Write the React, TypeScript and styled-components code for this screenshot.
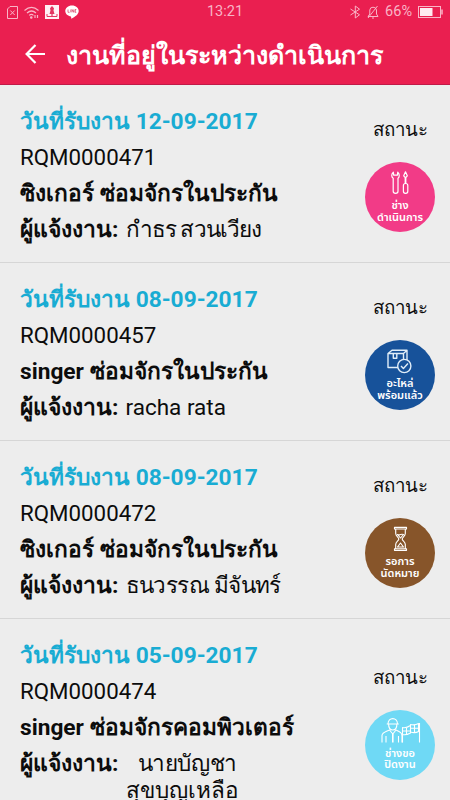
import React from 'react';
import styled, { createGlobalStyle } from 'styled-components';

const Global = createGlobalStyle`
  * { box-sizing: border-box; }
  body { margin: 0; background: #ededed; overflow: hidden; }
`;

const Screen = styled.div`
  width: 450px;
  height: 800px;
  overflow: hidden;
  background: #ededed;
  color: #0c0c0c;
  font-family: Roboto, sans-serif;
`;

const Header = styled.header`
  height: 85px;
  background: #ea1f50;
  border-bottom: 1px solid #c01a48;
  color: #fff;
`;

const StatusBar = styled.div`
  height: 24px;
  padding: 0 7px;
  display: grid;
  grid-template-columns: 1fr auto 1fr;
  align-items: center;
  color: #f9b4c6;
  font-size: 14.5px;
  line-height: 24px;
`;

const Icons = styled.div<{ $end?: boolean }>`
  display: flex;
  align-items: center;
  justify-content: ${p => (p.$end ? 'flex-end' : 'flex-start')};
  gap: 6px;
  svg { display: block; }
`;

const TitleBar = styled.div`
  height: 60px;
  display: flex;
  align-items: center;
  padding-left: 25px;
  svg { display: block; }
`;

const Title = styled.h1`
  margin: 3px 0 0 20.5px;
  font-size: 25.1px;
  line-height: 36px;
  font-weight: 700;
  white-space: nowrap;
`;

const Job = styled.article<{ $tall?: boolean }>`
  height: ${p => (p.$tall ? 205 : 178)}px;
  display: flex;
  align-items: center;
  justify-content: space-between;
  padding: 0 15px 0 20px;
  border-bottom: 1px solid #d6d6d6;
`;

const Details = styled.div`
  display: flex;
  flex-direction: column;
  align-self: flex-start;
  padding-top: 18px;
`;

const Line = styled.div<{ $bold?: boolean; $blue?: boolean }>`
  height: 36px;
  line-height: ${p => (p.$bold ? 38 : 36)}px;
  font-size: ${p => (p.$bold ? 22.7 : 22.3)}px;
  white-space: pre;
  font-weight: ${p => (p.$bold ? 700 : 400)};
  color: ${p => (p.$blue ? '#19acd3' : 'inherit')};
`;

const Reporter = styled.div`
  display: flex;
  height: 36px;
  font-size: 22.5px;
  line-height: 36px;
  white-space: pre;
`;

const Label = styled.b`
  width: 105.5px;
  font-size: 22.9px;
  line-height: 38px;
`;

const Names = styled.div<{ $tracking: number }>`
  text-align: center;
  letter-spacing: ${p => p.$tracking}px;
  & > div + div { margin-top: -9px; letter-spacing: 0; }
`;

const Status = styled.div`
  width: 70px;
  display: flex;
  flex-direction: column;
  align-items: center;
`;

const StatusLabel = styled.div`
  font-size: 18.7px;
  line-height: 28px;
  height: 47px;
  padding-top: 1px;
`;

const Badge = styled.div<{ $color: string }>`
  width: 70px;
  height: 70px;
  border-radius: 50%;
  background: ${p => p.$color};
  color: #fff;
  display: flex;
  flex-direction: column;
  align-items: center;
  padding-top: 6px;
  font-family: Roboto, "Noto Sans Thai", sans-serif;
  svg { display: block; flex: none; margin-bottom: 4px; }
`;

const BadgeText = styled.span`
  font-size: 11px;
  line-height: 11.5px;
  font-weight: 600;
  white-space: nowrap;
`;

const ToolsIcon = () => (
  <svg width="50" height="28" viewBox="0 0 50 28" fill="none" stroke="#fff" strokeWidth="1.2" strokeLinejoin="round">
    <path d="M18.3 4.2 18.7 7.2H22.4L22.8 4.2C24.8 6 24.6 9 23 10.3V23.3Q23 25.3 20.6 25.3 18.2 25.3 18.2 23.3V10.3C16.3 9 16.2 6 18.3 4.2Z" />
    <path d="M30.5 3.8 32.3 7.8 30.8 9.5V15H30.2V9.5L28.7 7.8Z" />
    <rect x="28.4" y="15.5" width="4.4" height="9.8" rx="2" />
  </svg>
);

const BoxIcon = () => (
  <svg width="50" height="28" viewBox="0 0 50 28" fill="none" stroke="#e0edf8" strokeWidth="1.4" strokeLinejoin="round">
    <path d="M23 21.5H13V7.5L17 4.2H32L28.5 7.5H13M28.5 7.5V13.5M32 4.2V14M18.3 7.5V12.3H21.8V7.5" />
    <circle cx="29.3" cy="20" r="6.6" />
    <path d="m26 20 2.4 2.5 4.5-5" />
  </svg>
);

const HourglassIcon = () => (
  <svg width="50" height="28" viewBox="0 0 50 28" fill="none" stroke="#fff" strokeWidth="1.15" strokeLinejoin="round">
    <path d="M19.5 3.3H31.5V5H19.5ZM19.5 24.7H31.5V26.3H19.5ZM20.7 5V9.5C20.7 12 23.8 13.3 23.8 15S20.7 18 20.7 20.5V24.7M30.3 5V9.5C30.3 12 27.2 13.3 27.2 15S30.3 18 30.3 20.5V24.7" />
    <path d="M22.5 10.5C24 12 25 9.5 28.5 10.5L25.5 14ZM22.5 23 25.5 19 28.5 23Z" />
  </svg>
);

const WorkerIcon = () => (
  <svg width="50" height="28" viewBox="0 0 50 28" fill="none" stroke="#fff" strokeWidth="1.1" strokeLinejoin="round">
    <path d="M13 8C13 .8 22.5 .8 22.5 8M11.7 8H23.8M13.6 8C13.6 16 21.9 16 21.9 8M7 26.5V19.5C7 16.5 10 16 14.5 14L17.8 18 21 14C25.5 16 27 17 27 20V26.5M11 20V26.5M23.5 20V26.5" />
    <path d="M17.8 18V26.5" strokeWidth="1.6" />
    <path d="M27.5 11.5Q31 12.5 35.5 9.5V17Q31 19.5 27.5 18.5ZM27.5 18V26.5M31.5 11.8V19M27.5 15H35.5M35.5 8.5Q40 9.5 43.5 7.5V15.5Q40 17.5 35.5 16ZM39.5 8.8V16.5M35.5 12.3H43.5M44.5 7V26.5" />
  </svg>
);

const jobs = [
  { date: '12-09-2017', id: 'RQM0000471', title: 'ซิงเกอร์ ซ่อมจักรในประกัน', names: ['กำธร สวนเวียง'], tracking: -0.9, color: '#f23b87', icon: <ToolsIcon />, status: ['ช่าง', 'ดำเนินการ'] },
  { date: '08-09-2017', id: 'RQM0000457', title: 'singer ซ่อมจักรในประกัน', names: ['racha rata'], tracking: 0, color: '#17529a', icon: <BoxIcon />, status: ['อะไหล่', 'พร้อมแล้ว'] },
  { date: '08-09-2017', id: 'RQM0000472', title: 'ซิงเกอร์ ซ่อมจักรในประกัน', names: ['ธนวรรณ มีจันทร์'], tracking: -0.6, color: '#87552a', icon: <HourglassIcon />, status: ['รอการ', 'นัดหมาย'] },
  { date: '05-09-2017', id: 'RQM0000474', title: 'singer ซ่อมจักรคอมพิวเตอร์', names: ['  นายบัญชา', 'สุขบุญเหลือ'], tracking: -0.4, color: '#6fd9f5', icon: <WorkerIcon />, status: ['ช่างขอ', 'ปิดงาน'] },
];

export default function App() {
  return (
    <Screen>
      <Global />
      <Header>
        <StatusBar>
          <Icons>
            <svg width="11" height="13" viewBox="0 0 11 13" fill="none" stroke="#f9b4c6"><path d="M3 .5H10.5V12.5H.5V3ZM3.3 4.5 7.7 9M7.7 4.5 3.3 9" /></svg>
            <svg width="15" height="13" viewBox="0 0 15 13" fill="none" stroke="#f9b4c6" strokeWidth="1.2"><path d="M.5 4.5Q7.5-1.8 14.5 4.5M3 7Q7.5 3 12 7M5.2 9.4Q7.5 7.5 9.5 9.4" /><circle cx="7.3" cy="11.5" r=".7" fill="#f9b4c6" /><path d="M11 9V12M13.5 9V12" /></svg>
            <svg width="14" height="14" viewBox="0 0 14 14"><path fill="#fff0f4" d="M0 0H14V14H0Z" /><path fill="#e33560" d="M7 1 9 3.2 8.5 5.5 9.5 9H4.5L5.5 5.5 5 3.2ZM6.4 9H7.6V12H6.4Z" /><path d="M2 9V11.5H12V9" fill="none" stroke="#e33560" /></svg>
            <svg width="14" height="14" viewBox="0 0 14 14"><path fill="#fff" d="M7 .5C3 .5.3 3 .3 6.1.3 9 3 11.2 6 11.5L6.3 13.8C10 11.9 13.7 9.4 13.7 6.1 13.7 3 11 .5 7 .5Z" /><path d="M3 4.5V7.3H4.6M5.8 4.5V7.3M7 7.3V4.5L8.7 7.3V4.5M11.3 4.5H10V7.3H11.3M10 5.9H11" fill="none" stroke="#d94c70" strokeWidth=".8" /></svg>
          </Icons>
          <span>13:21</span>
          <Icons $end>
            <svg width="11" height="14" viewBox="0 0 11 14" fill="none" stroke="#f9b4c6"><path d="M.5 4 9.5 9.8 5.3 13V1L9.5 4.2.5 10" /></svg>
            <svg width="12" height="14" viewBox="0 0 12 14" fill="none" stroke="#f9b4c6"><path d="M1 11.5H11L9.5 9V5Q9 2.2 6 2.2 3 2.2 2.8 5V9ZM5 13H7M10.5 1 1 13" /></svg>
            <span>66%</span>
            <svg width="25" height="12" viewBox="0 0 25 12"><rect x=".5" y=".5" width="22" height="11" fill="none" stroke="#f9b4c6" /><path d="M2 2H14.5V10H2Z" fill="#ffeaf0" /><path d="M24 3.5V8.5" stroke="#f9b4c6" strokeWidth="1.5" /></svg>
          </Icons>
        </StatusBar>
        <TitleBar>
          <svg width="20" height="20" viewBox="0 0 20 20" fill="none" stroke="#fff" strokeWidth="2.2"><path d="M20 10H2M10.5 1 1.6 10 10.5 19" /></svg>
          <Title>งานที่อยู่ในระหว่างดำเนินการ</Title>
        </TitleBar>
      </Header>
      <main>
        {jobs.map(job => (
          <Job key={job.id} $tall={job.names.length > 1}>
            <Details>
              <Line $bold $blue>{'วันที่รับงาน ' + job.date}</Line>
              <Line>{job.id}</Line>
              <Line $bold>{job.title}</Line>
              <Reporter>
                <Label>ผู้แจ้งงาน:</Label>
                <Names $tracking={job.tracking}>{job.names.map(n => <div key={n}>{n}</div>)}</Names>
              </Reporter>
            </Details>
            <Status>
              <StatusLabel>สถานะ</StatusLabel>
              <Badge $color={job.color}>
                {job.icon}
                {job.status.map(s => <BadgeText key={s}>{s}</BadgeText>)}
              </Badge>
            </Status>
          </Job>
        ))}
      </main>
    </Screen>
  );
}
